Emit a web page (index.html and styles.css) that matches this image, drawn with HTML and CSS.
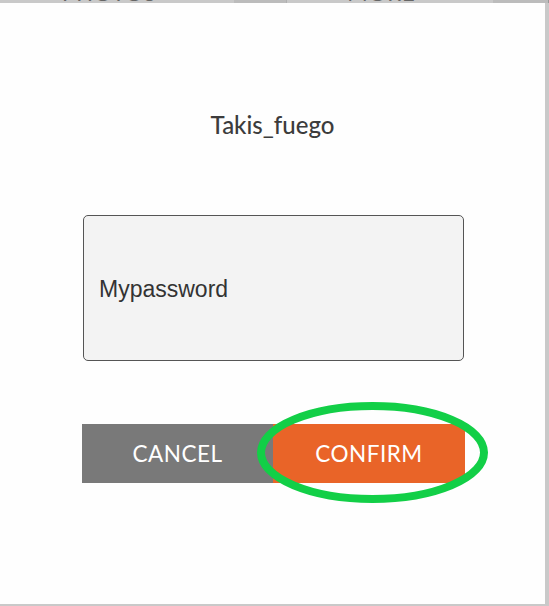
FILE: index.html
```html
<!DOCTYPE html>
<html>
<head>
<meta charset="utf-8">
<link rel="stylesheet" href="styles.css">
</head>
<body>
<div class="page">
  <div class="topbar">
    <span class="tab-text photos">PHOTOS</span>
    <span class="tab t2"></span>
    <span class="tab-text more">MORE</span>
    <span class="tab t3"></span>
  </div>
  <div class="row">
    <div class="modal">
      <div class="title">Takis_fuego</div>
      <div class="field">Mypassword</div>
      <div class="actions">
        <div class="btn cancel">CANCEL</div>
        <div class="btn confirm">CONFIRM</div>
        <svg class="ring" width="231" height="101" viewBox="0 0 231 101">
          <ellipse cx="115.5" cy="50.5" rx="111.5" ry="46.5" fill="none" stroke="#12cf47" stroke-width="8"/>
        </svg>
      </div>
    </div>
    <div class="side"></div>
  </div>
</div>
</body>
</html>
```
FILE: styles.css
```css
html, body {
  margin: 0;
  padding: 0;
  background: #c9c9c9;
}
.page {
  width: 549px;
  height: 606px;
  overflow: hidden;
  display: flex;
  flex-direction: column;
}
.topbar {
  height: 3px;
  overflow: hidden;
  display: flex;
  background: #c9c9c9;
}
.tab-text {
  font-family: "Lato", sans-serif;
  font-size: 22px;
  line-height: 22px;
  color: #666;
  margin-top: -18px;
  letter-spacing: 1px;
}
.photos { margin-left: 62px; width: 140px; }
.more { margin-left: 60px; width: 90px; }
.tab { display: block; height: 3px; }
.t2 { width: 53px; background: #bcbcbc; margin-left: 33px; border-right: 1px solid #b0b0b0; }
.t3 { width: 56px; background: #bcbcbc; margin-left: 56px; border-right: 1px solid #999; }
.row {
  display: flex;
  height: 601px;
}
.modal {
  width: 545px;
  height: 601px;
  background: #fefefe;
  display: flex;
  flex-direction: column;
}
.side {
  width: 4px;
  background: #c9c9c9;
}
.title {
  margin-top: 110px;
  height: 24px;
  line-height: 24px;
  text-align: center;
  font-family: "Lato", sans-serif;
  font-size: 24px;
  font-weight: 500;
  color: #3c3c3c;
}
.field {
  margin-top: 78px;
  margin-left: 83px;
  width: 364px;
  height: 142px;
  border: 1px solid #555;
  border-radius: 5px;
  background: #f3f3f3;
  padding-left: 15px;
  padding-top: 2px;
  display: flex;
  align-items: center;
  font-family: "Liberation Sans", Arial, sans-serif;
  font-size: 23px;
  color: #333;
}
.actions {
  margin-top: 63px;
  margin-left: 82px;
  display: flex;
  position: relative;
  width: 383px;
}
.btn {
  height: 59px;
  display: flex;
  align-items: center;
  justify-content: center;
  font-family: "Lato", sans-serif;
  font-size: 22.5px;
  color: #fff;
  letter-spacing: 0.5px;
}
.cancel {
  width: 191px;
  background: #797979;
}
.confirm {
  width: 192px;
  background: #e96428;
}
.ring {
  position: absolute;
  left: 175px;
  top: -22px;
}
```
